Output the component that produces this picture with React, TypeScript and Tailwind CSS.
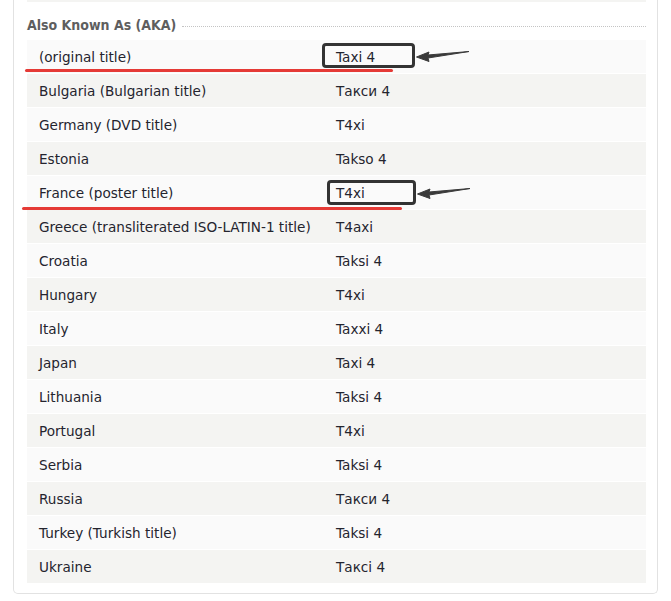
const rows: [string, string][] = [
  ["(original title)", "Taxi 4"],
  ["Bulgaria (Bulgarian title)", "Такси 4"],
  ["Germany (DVD title)", "T4xi"],
  ["Estonia", "Takso 4"],
  ["France (poster title)", "T4xi"],
  ["Greece (transliterated ISO-LATIN-1 title)", "T4axi"],
  ["Croatia", "Taksi 4"],
  ["Hungary", "T4xi"],
  ["Italy", "Taxxi 4"],
  ["Japan", "Taxi 4"],
  ["Lithuania", "Taksi 4"],
  ["Portugal", "T4xi"],
  ["Serbia", "Taksi 4"],
  ["Russia", "Такси 4"],
  ["Turkey (Turkish title)", "Taksi 4"],
  ["Ukraine", "Таксі 4"],
];

// hand-drawn style arrow pointing left at the boxed title
function Arrow({ className }: { className: string }) {
  return (
    <svg className={className} width="56" height="20" viewBox="0 0 56 20">
      <path
        d="M54 7.5 L13 11 L14 8 L1.5 13 L14 17.5 L13 14 Z"
        fill="#3a3a3a"
        stroke="#3a3a3a"
        strokeWidth="1"
        strokeLinejoin="round"
      />
    </svg>
  );
}

export default function App() {
  return (
    <div className="h-[601px] w-[671px] bg-white font-['DejaVu_Sans',sans-serif] text-[13.6px] text-[#24242e]">
      <div className="relative ml-[13px] w-[645px] rounded-b-[5px] border-x border-b border-[#e2e2e2] pb-[9px] pl-[13px] pr-[11px]">
        <div className="h-[2px] bg-[#f4f4f2]" />
        <div className="mt-[13px] flex h-[20px] items-center gap-[6px]">
          <h2 className="font-['DejaVu_Sans_Condensed','DejaVu_Sans',sans-serif] text-[14px] font-bold text-[#5e5e5e]">
            Also Known As (AKA)
          </h2>
          <div className="mt-[3px] flex-1 border-t border-dotted border-[#c4c4c4]" />
        </div>
        <div className="mt-[5px]">
          {rows.map(([place, title], i) => (
            <div
              key={i}
              className={`flex h-[34px] items-center border-b border-white pt-[2px] ${i % 2 === 0 ? "bg-[#fafafa]" : "bg-[#f4f4f2]"}`}
            >
              <span className="w-[309px] shrink-0 pl-[12px]">{place}</span>
              <span>{title}</span>
            </div>
          ))}
        </div>

        {/* annotations drawn over the table */}
        <div className="absolute left-[308px] top-[43px] h-[25px] w-[93px] rounded-[4px] border-[3px] border-[#333]" />
        <div className="absolute left-[11px] top-[69px] h-[3px] w-[368px] rounded-full bg-[#e53a36]" />
        <Arrow className="absolute left-[401px] top-[44px]" />
        <div className="absolute left-[313px] top-[180px] h-[25px] w-[89px] rounded-[4px] border-[3px] border-[#333]" />
        <div className="absolute left-[8px] top-[207px] h-[3px] w-[380px] rounded-full bg-[#e53a36]" />
        <Arrow className="absolute left-[402px] top-[181px]" />
      </div>
    </div>
  );
}
